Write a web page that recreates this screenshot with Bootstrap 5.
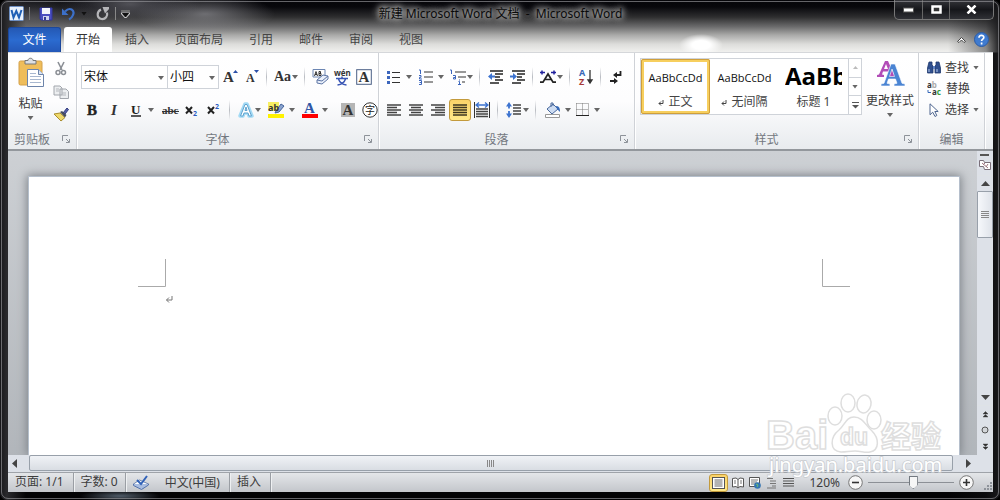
<!DOCTYPE html>
<html lang="zh-CN">
<head>
<meta charset="utf-8">
<meta name="viewport" content="width=device-width, initial-scale=1">
<title>新建 Microsoft Word 文档 - Microsoft Word</title>
<link href="https://cdn.jsdelivr.net/npm/bootstrap@5.3.0/dist/css/bootstrap.min.css" rel="stylesheet">
<script src="https://cdn.jsdelivr.net/npm/bootstrap@5.3.0/dist/js/bootstrap.bundle.min.js" defer></script>
<style>
body{font:12px/16px "Noto Sans","Noto Sans CJK SC",sans-serif;color:#3b3b3b;background:#000}
button{font:inherit;color:inherit;background:none;border:0;padding:0}
svg{display:block;flex:none}
.win{min-height:100vh;height:100vh;padding:0 7px 8px 8px;border-radius:7px;position:relative;
 background:
 linear-gradient(90deg,#17171a 0,#2a2a2d 7px,transparent 26px,transparent calc(100% - 52px),rgba(20,20,22,.45) calc(100% - 14px),#1a1a1c 100%),
 radial-gradient(ellipse 70px 20px at 130px 4px,rgba(130,130,138,.6),transparent),
 radial-gradient(ellipse 70px 20px at 205px 14px,rgba(150,150,155,.65),transparent),
 radial-gradient(ellipse 70px 26px at 30px 18px,rgba(100,100,105,.6),transparent),
 radial-gradient(ellipse 22px 11px at 701px 45px,#fff 40%,transparent),
 radial-gradient(ellipse 40px 6px at 120px 496px,rgba(130,150,170,.6),transparent),
 linear-gradient(#050509 0,#08080c 7px,#2e2e2f 17px,#6d6d6e 27px,#a9a9a8 35px,#dcdcda 44px,#f0f0ee 52px,#020204 53px)}
.win::after{content:"";position:absolute;inset:1px;border:1px solid rgba(150,150,155,.65);border-radius:7px;pointer-events:none}
.titlebar{height:27px;flex:none}
.quick{padding-left:1px;height:27px;gap:5px}
.caption{font-size:12px;color:#0a0a0a;text-shadow:0 0 5px #aaa,0 0 6px #aaa,0 0 8px #999,0 0 10px #999,0 0 12px #888;margin:0;font-weight:400}
.wctl{height:20px;border:1px solid #777;border-top:0;border-radius:0 0 5px 5px;background:linear-gradient(#34353a,#15161a 50%,#303136);overflow:hidden;margin-right:-1px}
.wctl button{width:27px;height:19px;display:grid;place-items:center}
.wctl button+button{border-left:1px solid #666}
.wctl button:last-child{width:44px}
.tabs{height:25px;flex:none;color:#444}
.tabs a{color:inherit;text-decoration:none;padding:5px 13px 4px;height:25px}
.tabs .file{width:53px;padding:4px 0;text-align:center;color:#fff;background:linear-gradient(#2458b4,#2b6bd0 50%,#2458b8);border:1px solid #1c489c;border-radius:3px 3px 0 0;border-bottom:0}
.tabs .on{padding:5px 12px 4px;margin-left:3px;background:#fff;border-radius:3px 3px 0 0;color:#333}
.ribbon{height:99px;flex:none;background:linear-gradient(#fff 0,#fdfdfe 50%,#e8ebee 100%);border-top:1px solid #d5d7da;border-bottom:2px solid #93979c;overflow:hidden}
.grp{border-right:1px solid #cfd2d7;box-shadow:1px 0 #fff;display:flex;flex-direction:column;flex:none;position:relative}
.grp-name{font-size:12px;line-height:16px;color:#737880;text-align:center;margin-top:auto;padding-bottom:1px;padding-right:20px}
.launch{position:absolute;right:6px;bottom:6px}
.g-clip{width:69px}.g-font{width:302px;padding:0 4px}.g-para{width:256px;padding:0 4px}.g-style{width:284px;padding:0 5px}.g-edit{width:66px}
.g-edit .grp-name{padding-right:0}
.line1,.line2{display:flex;align-items:center;height:24px}
.line1{margin-top:12px}.line2{margin-top:9px}
.tb,.drop{height:22px;display:flex;align-items:center;flex:none}
.tb{width:22px;justify-content:center}
.drop{width:32px;padding-left:3px;gap:4px}
.tight{width:28px;gap:1px}
.g-font .drop{width:34px}.g-font .tight{width:30px}
.vsep{width:1px;height:20px;margin:0 5px 0 4px;background:linear-gradient(transparent,#b9bcc2,transparent);flex:none}
.slim{margin:0 4px 0 3px}
.car{width:6px;height:4px;background:#666;clip-path:polygon(0 0,100% 0,50% 100%);flex:none;display:block}
.quick .car{background:#111}
.combo{position:relative}
.combo select{appearance:none;height:24px;border:1px solid #cfd3d9;background:#fff;padding:0 2px;font-size:12px;color:#111;border-radius:0;display:block}
.combo .car{position:absolute;right:4px;top:11px;pointer-events:none}
.w-face{width:87px}.w-size{width:52px;margin-left:-1px}
.active-tool{background:linear-gradient(#fbd368,#ffe98a);border:1px solid #c39a3c;border-radius:3px}
.gallery{margin-top:5px;height:57px;border:1px solid #cfd3d9;background:#fff;flex:none}
.sty{width:69px;height:55px;overflow:hidden;text-align:center;border:3px solid transparent;border-radius:2px;color:#111;display:flex;flex-direction:column;align-items:center;white-space:nowrap}
.sty.sel{border-color:#f7cf5e;outline:1px solid #cf9f3b;outline-offset:-1px}
.sty .demo{height:31px;line-height:32px;font-family:"Open Sans",sans-serif;font-size:11px}
.sty .big{font-size:24px;line-height:28px;font-weight:700;width:57px;overflow:hidden;color:#000}
.sty .cap{line-height:18px;color:#444}
.gal-nav{width:13px;border-left:1px solid #cfd3d9}
.gal-nav button{flex:1;display:grid;place-items:center}
.gal-nav button+button{border-top:1px solid #cfd3d9}
.edit-btn{height:21px;display:flex;align-items:center;gap:4px}
.docwrap{flex:1 1 0;min-height:0;background:linear-gradient(#cdd0d4,#b0b4b9)}
.canvas{flex:1;padding:25px 17px 0 20px;overflow:hidden}
.sheet{background:#fff;height:100%;box-shadow:0 0 9px 1px #7d8288;border:1px solid #b5bfcc;border-bottom:0;padding:82px 109px 0;position:relative}
.vbar{width:16px;background:#dde1e8;flex:none;padding-bottom:2px}
.vbar button,.vbar span{display:grid;place-items:center}
.vthumb{height:47px;border:1px solid #98a0aa;border-radius:1px;background:linear-gradient(90deg,#f6f8fb,#dfe3ea)}
.hbar{height:17px;flex:none;background:#dde1e8}
.hthumb{flex:1;border:1px solid #98a0aa;border-radius:2px;background:linear-gradient(#f0f2f6,#d9dde3);margin:0 0 1px;display:grid;place-items:center}
.hbar .end{width:21px;display:grid;place-items:center}
.hbar .end.rt{width:24px;padding-left:6px}
.status{height:20px;flex:none;background:linear-gradient(#e4e6e9,#c3c6cb);border-top:1px solid #9fa3a9;color:#3d3d3d}
.status .cell{height:19px;line-height:18px;padding:0 9px 0 7px;border-right:1px solid #9a9ea4;box-shadow:1px 0 #eef0f2}
.status .cell:first-child+.cell{padding-right:7px}
.vbtn{width:17px;height:18px;display:grid;place-items:center}
.vbtn.active-tool{width:19px;margin-right:1px}
.zoomer{appearance:none;width:86px;height:16px;background:linear-gradient(#8c9096,#8c9096) center/100% 1px no-repeat;margin:0 5px}
.zoomer::-webkit-slider-thumb{appearance:none;width:9px;height:13px;background:#737980;clip-path:polygon(0 0,100% 0,100% 68%,50% 100%,0 68%);box-shadow:inset 0 0 0 1px #737980,inset 0 0 0 5px #f6f6f6}
.wm{position:absolute;right:50px;bottom:21px;pointer-events:none}
</style>
</head>
<body>
<div class="win d-flex flex-column">
 <header class="titlebar d-flex">
  <div class="quick d-flex align-items-center flex-grow-1 w-25">
   <svg width="15" height="15" viewBox="0 0 15 15"><rect x=".5" y=".5" width="14" height="14" rx="1" fill="#e9f1fb" stroke="#6e8fc2"/><path d="M2.500 4l2 7.500L7.300 5l2.700 6.500L12.500 4" fill="none" stroke="#1f5fb5" stroke-width="2"/></svg>
   <span style="width:1px;height:13px;background:#777"></span>
   <button class="ms-1" aria-label="保存"><svg width="14" height="14" viewBox="0 0 14 14"><path d="M1 1h12v12H2L1 12z" fill="#4b4fc0" stroke="#3337a0"/><path d="M3 1h8v6H3z" fill="#f3f5fb"/><path d="M4 9h6v4H4z" fill="#cfd4ee"/><path d="M5 10h2v3H5z" fill="#333a90"/></svg></button>
   <button class="ms-1" aria-label="撤销"><svg width="14" height="14" viewBox="0 0 14 14"><path d="M3 4.500C8-.5 13 3 11 8c-.6 1.800-2 3.500-4 4.500" fill="none" stroke="#3c70c9" stroke-width="2.200"/><path d="M0 1.500V8h6.500z" fill="#3c70c9"/></svg></button>
   <i class="car"></i>
   <button class="ms-1" aria-label="重复"><svg width="14" height="14" viewBox="0 0 14 14"><path d="M5 2.500C.5 4.500.5 11 5.500 12c4 .5 6.500-3 5.500-6.500" fill="none" stroke="#b5b5b8" stroke-width="2.200"/><path d="M6.500 0H13v2L9 6.500z" fill="#b5b5b8"/></svg></button>
   <span style="width:1px;height:13px;background:#888"></span>
   <button aria-label="自定义快速访问工具栏"><svg width="9" height="8" viewBox="0 0 9 8"><path d="M.5 1h8M1 3.500h7l-3.500 4z" stroke="#ccc" stroke-width="2"/><path d="M.5 1h8M1.500 3.500h6l-3 3.500z" stroke="#111" fill="#111"/></svg></button>
  </div>
  <h1 class="caption align-self-center lh-1">新建 Microsoft Word 文档 &nbsp;-&nbsp; Microsoft Word</h1>
  <div class="flex-grow-1 w-25 d-flex justify-content-end align-items-start">
   <div class="wctl d-flex">
    <button aria-label="最小化"><svg width="11" height="6"><rect x=".5" y="1" width="10" height="4" fill="#fff" stroke="#555"/></svg></button>
    <button aria-label="最大化"><svg width="11" height="9"><rect x="1.500" y="1.500" width="8" height="6" fill="#333" stroke="#fff" stroke-width="2.500"/></svg></button>
    <button aria-label="关闭"><svg width="11" height="9" viewBox="0 0 11 9"><path d="M1.500.5l8 8M9.500.5l-8 8" stroke="#fff" stroke-width="2.500"/></svg></button>
   </div>
  </div>
 </header>

 <nav class="tabs d-flex" aria-label="功能区">
  <a class="file" href="#">文件</a><a class="on" href="#">开始</a><a href="#">插入</a><a href="#">页面布局</a><a href="#">引用</a><a href="#">邮件</a><a href="#">审阅</a><a href="#">视图</a>
  <div class="ms-auto d-flex align-items-center gap-2 pe-1">
   <button aria-label="折叠功能区"><svg width="9" height="7" viewBox="0 0 9 7"><path d="M.5 5.500l4-4 4 4-1.500 1-2.500-2.500L2 6.500z" fill="#fff" stroke="#444"/></svg></button>
   <button aria-label="帮助"><svg width="15" height="15" viewBox="0 0 15 15"><circle cx="7.500" cy="7.500" r="7" fill="#3f7bd0" stroke="#2c5ca6"/><path d="M5 5.700c0-3.300 5-3 4.800-.2C9.700 7.200 7.600 7 7.600 9M7.600 10.500v2" fill="none" stroke="#fff" stroke-width="1.700"/></svg></button>
  </div>
 </nav>

 <section class="ribbon d-flex">
  <div class="grp g-clip">
   <div class="d-flex pt-1">
    <button class="d-flex flex-column align-items-center" style="width:45px">
     <svg width="26" height="31" viewBox="0 0 26 31"><rect x="1" y="4" width="23" height="24" rx="1.500" fill="#efbd5a" stroke="#d3a04a"/><path d="M7 7V3.500h3C10 .5 15 .5 15 3.500h3V7z" fill="#dcdfe3" stroke="#777"/><path d="M9.500 12.500h11l5 5v12h-16z" fill="#fff" stroke="#6d84aa"/><path d="M20.500 12.500v5h5" fill="#dbe5f4" stroke="#6d84aa"/><path d="M12 16.500h6M12 19.500h11M12 22.500h11M12 25.500h11" stroke="#a9b8d0"/></svg>
     <span class="mt-1 pt-1">粘贴</span><i class="car mt-1"></i>
    </button>
    <div class="d-flex flex-column gap-1 pt-1">
     <button aria-label="剪切"><svg width="16" height="16" viewBox="0 0 16 16"><path d="M5 1l4 8M11 1L7 9" stroke="#8b8f95" stroke-width="1.600"/><circle cx="5" cy="11.500" r="2" fill="none" stroke="#8b8f95" stroke-width="1.500"/><circle cx="10.500" cy="11.500" r="2" fill="none" stroke="#8b8f95" stroke-width="1.500"/></svg></button>
     <button class="my-1" aria-label="复制"><svg width="16" height="14" viewBox="0 0 16 14"><path d="M1 1h6l2 2v7H1zM7 4h6l2.500 2.500v7H7z" fill="#eceef0" stroke="#a2a6ac"/><path d="M3 4h3M3 6h3M9 8h4M9 10h4" stroke="#b5b8bd"/></svg></button>
     <button aria-label="格式刷"><svg width="16" height="16" viewBox="0 0 16 16"><path d="M10 6l4-5 1.500 1.500L12 7z" fill="#5760a8" stroke="#333d80"/><path d="M1 7l6-1 5 4.500L8 14z" fill="#efd96b" stroke="#a98d2e"/><path d="M7 5l2-1 4.500 4L12 10.500z" fill="#474c5c"/></svg></button>
    </div>
   </div>
   <div class="grp-name pe-1 me-3">剪贴板</div>
   <button class="launch" aria-label="剪贴板选项"><svg width="8" height="8" viewBox="0 0 8 8"><path d="M.5 6V.5H6M4 4l3 3M7.500 4v3.500H4" fill="none" stroke="#8d9299"/></svg></button>
  </div>

  <div class="grp g-font">
   <div class="line1">
    <label class="combo"><select class="w-face" aria-label="字体"><option>宋体</option></select><i class="car"></i></label>
    <label class="combo"><select class="w-size" aria-label="字号"><option>小四</option></select><i class="car"></i></label>
    <button class="tb" aria-label="增大字体"><svg width="15" height="16" viewBox="0 0 15 16"><text x="0" y="13" font-family="Liberation Serif" font-size="15" font-weight="700" fill="#333">A</text><path d="M10 4h5l-2.500-3z" fill="#2a4fa8"/></svg></button>
    <button class="tb" aria-label="缩小字体"><svg width="15" height="16" viewBox="0 0 15 16"><text x="1" y="13" font-family="Liberation Serif" font-size="12" font-weight="700" fill="#333">A</text><path d="M9 1h5l-2.500 3z" fill="#2a4fa8"/></svg></button>
    <span class="vsep slim"></span>
    <button class="drop tight" aria-label="更改大小写"><svg width="17" height="16" viewBox="0 0 17 16"><text x="0" y="12" font-family="Liberation Serif" font-size="14" font-weight="700" fill="#333">Aa</text></svg><i class="car"></i></button>
    <span class="vsep slim"></span>
    <button class="tb" aria-label="清除格式"><svg width="17" height="16" viewBox="0 0 17 16"><path d="M1 .5h12V8H1z" fill="#fff" stroke="#6c86b3"/><path d="M2.500 7L4 2.500 5.500 7M3 5.500h2M7 2.500v4h2v-2H7h1.500v-2z" fill="none" stroke="#333"/><path d="M5 11l6-5 5 1v3l-6 5-5-1z" fill="#e9effa" stroke="#5e76a5"/><path d="M5 11l5 1 6-5" fill="none" stroke="#5e76a5"/></svg></button>
    <button class="tb" aria-label="拼音指南"><svg width="18" height="18" viewBox="0 0 18 18"><text x="1" y="8" font-family="Noto Sans" font-size="8" font-weight="700" fill="#333">wén</text><path d="M3 10.500h12M9 8.500v2M5.500 11c1 3 4 5.500 8 6M12.500 11c-1 3-4 5.500-8 6" fill="none" stroke="#3b57b5" stroke-width="1.500"/></svg></button>
    <button class="tb" aria-label="字符边框"><svg width="16" height="16" viewBox="0 0 16 16"><rect x=".7" y=".7" width="14.600" height="14.600" fill="#fff" stroke="#4a5f85"/><text x="2.500" y="13" font-family="Liberation Serif" font-size="15" font-weight="700" fill="#333">A</text></svg></button>
   </div>
   <div class="line2">
    <button class="tb" aria-label="加粗"><svg width="14" height="16"><text x="2" y="13" font-family="Liberation Serif" font-size="15" font-weight="700" fill="#222" stroke="#222" stroke-width=".4">B</text></svg></button>
    <button class="tb" aria-label="倾斜"><svg width="14" height="16"><text x="4" y="13" font-family="Liberation Serif" font-size="15" font-weight="700" font-style="italic" fill="#333">I</text></svg></button>
    <button class="drop" aria-label="下划线"><svg width="16" height="16"><text x="3" y="12" font-family="Liberation Serif" font-size="13" font-weight="700" fill="#222">U</text><path d="M3 14h10" stroke="#222" stroke-width="1.500"/></svg><i class="car"></i></button>
    <button class="tb" aria-label="删除线"><svg width="17" height="16"><text x="0" y="12" font-family="Liberation Serif" font-size="11" font-weight="700" fill="#333">abc</text><path d="M0 9.500h17" stroke="#333"/></svg></button>
    <button class="tb" aria-label="下标"><svg width="16" height="18"><path d="M2 6l6 6.500M8 6l-6 6.500" stroke="#222" stroke-width="2"/><text x="9" y="15" font-family="Noto Sans" font-size="7" font-weight="700" fill="#2a5bc0">2</text></svg></button>
    <button class="tb" aria-label="上标"><svg width="16" height="18"><path d="M2 6l6 6.500M8 6l-6 6.500" stroke="#222" stroke-width="2"/><text x="9" y="8" font-family="Noto Sans" font-size="7" font-weight="700" fill="#2a5bc0">2</text></svg></button>
    <span class="vsep"></span>
    <button class="drop tight" aria-label="文本效果"><svg width="16" height="16"><path d="M2 14L7 2h2l5 12h-3l-1-3H6l-1 3z" fill="#bfe6f8" stroke="#a3daf5" stroke-width="3.500" stroke-linejoin="round"/><path d="M2.500 14L7 2.500h2L13.500 14H11l-1-3H6l-1 3zM7 8.500h2L8 5z" fill="#fff" stroke="#5fa3cf"/></svg><i class="car"></i></button>
    <button class="drop" aria-label="突出显示"><svg width="17" height="16"><rect width="11" height="9" fill="#f7ef62"/><path d="M8 9l5-7 3 2-5 6-4 1z" fill="#8aa4cf" stroke="#45639a"/><text x="0" y="9" font-family="Noto Sans" font-size="9" font-weight="700" fill="#333">ab</text><path d="M0 12h16v4H0z" fill="#fff200"/></svg><i class="car"></i></button>
    <button class="drop" aria-label="字体颜色"><svg width="16" height="16"><text x="2" y="11" font-family="Liberation Serif" font-size="15" font-weight="700" fill="#2f56a5">A</text><path d="M0 12h16v4H0z" fill="#f00"/></svg><i class="car"></i></button>
    <button class="tb ms-1" aria-label="字符底纹"><svg width="14" height="16"><path d="M0 1h14v14H0z" fill="#b5b5b5"/><text x="1.500" y="13" font-family="Liberation Serif" font-size="15" font-weight="700" fill="#333">A</text></svg></button>
    <button class="tb" aria-label="带圈字符"><svg width="16" height="16"><circle cx="8" cy="8" r="7.200" fill="#fff" stroke="#333"/><text x="3" y="12" font-family="Noto Sans CJK SC" font-size="10" fill="#222">字</text></svg></button>
   </div>
   <div class="grp-name">字体</div>
   <button class="launch" aria-label="字体选项"><svg width="8" height="8" viewBox="0 0 8 8"><path d="M.5 6V.5H6M4 4l3 3M7.500 4v3.500H4" fill="none" stroke="#8d9299"/></svg></button>
  </div>

  <div class="grp g-para">
   <div class="line1">
    <button class="drop" aria-label="项目符号"><svg width="16" height="14"><path d="M1 1h3v3H1zM1 6h3v3H1zM1 11h3v3H1z" fill="#3c66bd"/><path d="M6 2.500h8M6 7.500h8M6 12.500h8" stroke="#333" stroke-width="1.200"/></svg><i class="car"></i></button>
    <button class="drop" aria-label="编号"><svg width="16" height="16"><path d="M1 1h1.500v4M1 6.500h2v1.800H1.500V10H4M1 11.500h2.500v4H1M1.500 13.500h2" fill="none" stroke="#3c66bd"/><path d="M6 3h9M6 8h9M6 13h9" stroke="#333" stroke-width="1.200"/></svg><i class="car"></i></button>
    <button class="drop tight" aria-label="多级列表"><svg width="16" height="16"><path d="M0 1h1.500v4M3 6.500h2.500V10H3.500V8.500h2M9.500 10.500v1M8.500 12.500h1v3M8 15.500h3" fill="none" stroke="#3c66bd"/><path d="M5 3h11M8 8h8M12 13h3" stroke="#333"/></svg><i class="car"></i></button>
    <span class="vsep"></span>
    <button class="tb" aria-label="减少缩进"><svg width="16" height="14"><path d="M2 1h13M7 4h8M7 7h5M7 10h8M2 13h9" stroke="#222" stroke-width="1.700"/><path d="M0 6.500L4 3v2.500h3v2H4V10z" fill="#3c73d0"/></svg></button>
    <button class="tb" aria-label="增加缩进"><svg width="16" height="14"><path d="M2 1h13M7 4h8M7 7h5M7 10h8M2 13h9" stroke="#222" stroke-width="1.700"/><path d="M7 6.500L3 3v2.500H0v2h3V10z" fill="#3c73d0"/></svg></button>
    <span class="vsep slim"></span>
    <button class="drop tight" aria-label="中文版式"><svg width="16" height="14"><path d="M0 12.200h3L8 4l5 8.200h3M5 9.500h6" fill="none" stroke="#222" stroke-width="1.700"/><path d="M2 .5v4M0 2.500h5M14 .5v4M11 2.500h5" stroke="#20209c" stroke-width="1.500"/></svg><i class="car"></i></button>
    <span class="vsep"></span>
    <button class="tb" aria-label="排序"><svg width="16" height="18"><text font-family="Noto Sans" font-size="9" font-weight="700"><tspan x="1" y="8" fill="#3768b8">A</tspan><tspan x="1" y="17" fill="#a63838">Z</tspan></text><path d="M12 2v11M10 12h4l-2 3z" stroke="#333" stroke-width="1.300" fill="#333"/></svg></button>
    <span class="vsep slim"></span>
    <button class="tb" aria-label="显示编辑标记"><svg width="12" height="14"><path d="M10.500 1v4H5M0 11h4" fill="none" stroke="#222" stroke-width="1.800"/><path d="M3 5l4-3v6zM8 11L4 8v6z" fill="#222"/></svg></button>
   </div>
   <div class="line2">
    <button class="tb" aria-label="左对齐"><svg width="14" height="13"><path d="M0 1h14M0 3.500h10M0 6h14M0 8.500h10M0 11h14" stroke="#444" stroke-width="1.500"/></svg></button>
    <button class="tb" aria-label="居中"><svg width="14" height="13"><path d="M0 1h14M2 3.500h10M0 6h14M2 8.500h10M0 11h14" stroke="#444" stroke-width="1.500"/></svg></button>
    <button class="tb" aria-label="右对齐"><svg width="14" height="13"><path d="M0 1h14M4 3.500h10M0 6h14M4 8.500h10M0 11h14" stroke="#444" stroke-width="1.500"/></svg></button>
    <button class="tb active-tool" aria-label="两端对齐"><svg width="14" height="13"><path d="M0 1h14M0 3.500h14M0 6h14M0 8.500h14M0 11h14" stroke="#3e3720" stroke-width="1.500"/></svg></button>
    <button class="tb" aria-label="分散对齐"><svg width="16" height="16"><path d="M.5 0v16M15.500 0v16" stroke="#333"/><path d="M2 3h12M5 .5L2 3l3 2.500M11 .5L14 3l-3 2.500" fill="none" stroke="#3c73d0" stroke-width="1.300"/><path d="M2 7h12M2 9.500h12M2 12h12M2 14.500h12" stroke="#444" stroke-width="1.300"/></svg></button>
    <span class="vsep"></span>
    <button class="drop tight" aria-label="行距"><svg width="16" height="16"><path d="M3 3v3.500M3 9v4" stroke="#3c73d0" stroke-width="1.800"/><path d="M0 4.500L3 0l3 4.500zM0 11.500L3 16l3-4.500z" fill="#3c73d0"/><path d="M7 3h8M7 6h8M7 9h8M7 12h8" stroke="#444" stroke-width="1.300"/></svg><i class="car"></i></button>
    <span class="vsep"></span>
    <button class="drop" aria-label="底纹"><svg width="17" height="16"><path d="M3 7l6-5 5 5-6 5z" fill="#cddcf2" stroke="#48689c"/><path d="M7 5V1h2v3" fill="none" stroke="#48689c"/><path d="M12 4c3 0 4 2 4 6l-3-3z" fill="#3669b8"/><path d="M1.500 12.500h14v3h-14z" fill="#fff" stroke="#999"/></svg><i class="car"></i></button>
    <button class="drop" aria-label="边框"><svg width="14" height="14"><path d="M.5.5h12v12M.5.5v12M6.500.5v12M.5 6.500h12" fill="none" stroke="#777" stroke-dasharray="1 1"/><path d="M0 12.500h13" stroke="#222"/></svg><i class="car"></i></button>
   </div>
   <div class="grp-name">段落</div>
   <button class="launch" aria-label="段落选项"><svg width="8" height="8" viewBox="0 0 8 8"><path d="M.5 6V.5H6M4 4l3 3M7.500 4v3.500H4" fill="none" stroke="#8d9299"/></svg></button>
  </div>

  <div class="grp g-style">
   <div class="d-flex">
    <div class="gallery d-flex">
     <button class="sty sel"><span class="demo">AaBbCcDd</span><span class="cap d-flex align-items-center gap-1"><svg width="6" height="7"><path d="M5 1v3.500H1M3 2.500l-2 2 2 2" fill="none" stroke="#444"/></svg>正文</span></button>
     <button class="sty"><span class="demo">AaBbCcDd</span><span class="cap d-flex align-items-center gap-1"><svg width="6" height="7"><path d="M5 1v3.500H1M3 2.500l-2 2 2 2" fill="none" stroke="#444"/></svg>无间隔</span></button>
     <button class="sty"><span class="demo big">AaBb</span><span class="cap">标题 1</span></button>
     <div class="gal-nav d-flex flex-column">
      <button aria-label="上一行"><svg width="5" height="3"><path d="M0 3h5L2.500 0z" fill="#bbb"/></svg></button>
      <button aria-label="下一行"><i class="car"></i></button>
      <button aria-label="其他"><svg width="7" height="7"><path d="M0 .5h7" stroke="#555"/><path d="M0 3h7L3.500 6.500z" fill="#555"/></svg></button>
     </div>
    </div>
    <button class="d-flex flex-column align-items-center ms-1 text-nowrap pt-1">
     <svg width="29" height="32" viewBox="0 0 29 32"><path d="M1 20v-2l2-.500L9 4h3l6 13.500 2 .5v2h-8v-2l2-.5-1-3H7l-1 3 2 .5v2zM8 12h4l-2-5z" fill="#b24db7"/><path d="M5 29v-2l3-.700L15 7h4l7 19.300 3 .7v2H18v-2l3-.7-1.500-4.300h-7L11 26.300l3 .7v2zM13.500 19.500h5L16 12z" fill="#4a84d3" stroke="#fff" stroke-width=".6"/></svg>
     <span class="mt-1">更改样式</span><i class="car mt-1"></i>
    </button>
   </div>
   <div class="grp-name">样式</div>
   <button class="launch" aria-label="样式选项"><svg width="8" height="8" viewBox="0 0 8 8"><path d="M.5 6V.5H6M4 4l3 3M7.500 4v3.500H4" fill="none" stroke="#8d9299"/></svg></button>
  </div>

  <div class="grp g-edit">
   <div class="ps-2">
    <button class="edit-btn mt-1"><svg width="14" height="13" viewBox="0 0 14 13"><path d="M2 1h3v3l1 1v7H.5V7zM12 1H9v3L8 5v7h5.500V7z" fill="#2f4f8e" stroke="#20386c" stroke-width=".8"/><path d="M6 5h2v3H6z" fill="#5f82c3"/><path d="M2 8v3M10 8v3" stroke="#b8cbec"/></svg>查找<i class="car"></i></button>
    <button class="edit-btn"><svg width="15" height="16" viewBox="0 0 15 16"><text font-family="Noto Sans" font-size="8" font-weight="700"><tspan x="0" y="7" fill="#333">a</tspan><tspan fill="#aaa">b</tspan><tspan x="5" y="14" fill="#333">a</tspan><tspan fill="#2f9c3a">c</tspan></text><path d="M1 9v2.500h3" fill="none" stroke="#3768b8"/></svg>替换</button>
    <button class="edit-btn"><svg width="14" height="14" viewBox="0 0 14 14"><path d="M3 .8v11L5.700 9.200 8 13.500l1.800-1L7.800 8.500h3.400z" fill="#fff" stroke="#4e658f"/></svg>选择<i class="car"></i></button>
   </div>
   <div class="grp-name">编辑</div>
  </div>
 </section>

 <main class="docwrap d-flex">
  <div class="flex-grow-1 d-flex flex-column">
   <div class="canvas">
    <article class="sheet">
     <div class="d-flex justify-content-between">
      <svg width="28" height="28"><path d="M0 27.500h27.500V0" fill="none" stroke="#aaa"/></svg>
      <svg width="28" height="28"><path d="M28 27.500H.5V0" fill="none" stroke="#aaa"/></svg>
     </div>
     <svg class="ms-4 mt-2" width="14" height="9"><path d="M10 1v4H4.500M7 2.500L4.500 5 7 7.500" fill="none" stroke="#777"/></svg>
    </article>
   </div>
   <div class="hbar d-flex">
    <button class="end" aria-label="向左"><svg width="5" height="9" class="me-2"><path d="M5 0v9L0 4.500z" fill="#444"/></svg></button>
    <div class="hthumb"><svg width="8" height="7"><path d="M.5 0v7M2.500 0v7M4.500 0v7M6.500 0v7" stroke="#888"/></svg></div>
    <button class="end rt" aria-label="向右"><svg width="5" height="9"><path d="M0 0v9l5-4.500z" fill="#444"/></svg></button>
   </div>
  </div>
  <div class="vbar d-flex flex-column">
   <button aria-label="标尺" class="border-bottom pb-1"><svg width="14" height="20"><path d="M2 4h9" stroke="#555" stroke-width="2"/><path d="M1.500 9.500h4l1 2h6v7h-6l-1-3h-4z" fill="#fff" stroke="#7a6f7a"/><path d="M4 12l6 5M7 12l-2 2M10 13l-2 3" stroke="#9d7580"/></svg></button>
   <button style="height:15px" aria-label="向上"><svg width="9" height="5"><path d="M0 5h9L4.500 0z" fill="#444"/></svg></button>
   <div class="vthumb d-grid align-items-center justify-content-center"><svg width="8" height="8"><path d="M0 .5h8M0 2.500h8M0 4.500h8M0 6.500h8" stroke="#888"/></svg></div>
   <button class="mt-auto border-bottom" style="height:16px" aria-label="向下"><svg width="9" height="5"><path d="M0 0h9L4.500 5z" fill="#444"/></svg></button>
   <button style="height:16px" aria-label="前一页"><svg width="7" height="7"><path d="M1 3h5L3.500.5zM1 6h5L3.500 3.500z" fill="#333" stroke="#333" stroke-width=".4"/></svg></button>
   <button style="height:16px" aria-label="选择浏览对象"><svg width="8" height="8"><circle cx="4" cy="4" r="3" fill="#d2d5d9" stroke="#555"/></svg></button>
   <button style="height:16px" aria-label="下一页"><svg width="7" height="7"><path d="M1 1h5L3.500 3.500zM1 4h5L3.500 6.500z" fill="#333" stroke="#333" stroke-width=".4"/></svg></button>
   <span style="height:16px"></span>
  </div>
 </main>

 <footer class="status d-flex align-items-center">
  <span class="cell">页面: 1/1</span><span class="cell">字数: 0</span>
  <span class="cell d-flex align-items-center gap-3"><svg width="16" height="15"><path d="M.5 9l6-4 9 4-6 4.500z" fill="#fff" stroke="#6d84b0"/><path d="M.5 9v1.500l8 4 7-4.500V9" fill="#a9bde0" stroke="#5573aa"/><path d="M4 5l4 4 6-8" fill="none" stroke="#3162b8" stroke-width="2"/></svg>中文(中国)</span>
  <span class="cell">插入</span>
  <div class="ms-auto d-flex align-items-center">
   <button class="vbtn active-tool" aria-label="页面视图"><svg width="13" height="12"><rect x=".5" y=".5" width="12" height="11" fill="#fff" stroke="#555"/><path d="M2.500 3h8M2.500 5h8M2.500 7h8M2.500 9h8" stroke="#666"/></svg></button>
   <button class="vbtn" aria-label="阅读版式"><svg width="12" height="12"><path d="M.5 1.500L4 1l2 1.500L8 1l3.500.5V10L8 9.500 6 11 4 9.500.5 10zM6 2.500V11" fill="#fff" stroke="#555"/><path d="M2 4h2M2 6h2M8 4h2M8 6h2" stroke="#777"/></svg></button>
   <button class="vbtn" aria-label="Web 版式"><svg width="12" height="12"><path d="M.5.500h10v9H.5z" fill="#fff" stroke="#555"/><path d="M2 3h7M2 5h6M2 7h4" stroke="#777"/><circle cx="8.500" cy="8.500" r="3.300" fill="#3576b4"/><path d="M7 7l2 1-1 2" fill="none" stroke="#6fc36c"/></svg></button>
   <button class="vbtn" aria-label="大纲视图"><svg width="12" height="12"><path d="M1 1.500h6M4 4h6M4 6.500h6M6 9h4M1 11h9" stroke="#777"/></svg></button>
   <button class="vbtn" aria-label="草稿"><svg width="11" height="11"><path d="M0 1.500h11M0 4h11M0 6.500h11M0 9h11" stroke="#555" stroke-width="1.200"/></svg></button>
   <button class="ms-2 ps-1">120%</button>
   <button class="ms-2" aria-label="缩小"><svg width="15" height="15"><circle cx="7.500" cy="7.500" r="6.800" fill="#f7f7f7" stroke="#777"/><path d="M4 7.500h7" stroke="#333" stroke-width="1.600"/></svg></button>
   <input class="zoomer" type="range" min="0" max="100" value="53" aria-label="缩放比例">
   <button aria-label="放大"><svg width="15" height="15"><circle cx="7.500" cy="7.500" r="6.800" fill="#f7f7f7" stroke="#777"/><path d="M4 7.500h7M7.500 4v7" stroke="#333" stroke-width="1.600"/></svg></button>
   <svg class="align-self-end ms-2" width="11" height="12"><path d="M8 2h2v2H8zM8 5h2v2H8zM5 5h2v2H5zM8 8h2v2H8zM5 8h2v2H5zM2 8h2v2H2z" fill="#8e939a"/></svg>
  </div>
 </footer>

 <svg class="wm" width="184" height="90" viewBox="0 0 184 90" aria-hidden="true">
  <g fill="#fff" stroke="#dedede" stroke-width="1.500">
   <ellipse cx="69" cy="27" rx="7" ry="9"/><ellipse cx="82" cy="14" rx="7" ry="9"/><ellipse cx="98" cy="15" rx="7" ry="9" transform="rotate(12 98 15)"/><ellipse cx="108" cy="31" rx="7" ry="9"/>
   <path d="M88 28c-8 0-9 8-15 13-9 7-10 21 2 22 6 0 8-1 14-1s10 2 15 1c10-2 9-14 2-21-6-5-9-14-18-14z"/>
   <g font-family="Liberation Sans" font-weight="700"><text x="0" y="60" font-size="40">Bai</text><text x="74" y="56" font-size="23">du</text></g>
   <text x="115" y="58" font-family="Noto Sans CJK SC" font-weight="700" font-size="30">经验</text>
  </g>
  <text x="3" y="83" font-family="Noto Sans" font-size="20" fill="#fff" stroke="#c9ccd0" stroke-width="1.500" paint-order="stroke">jingyan.baidu.com</text>
 </svg>
</div>
</body>
</html>
